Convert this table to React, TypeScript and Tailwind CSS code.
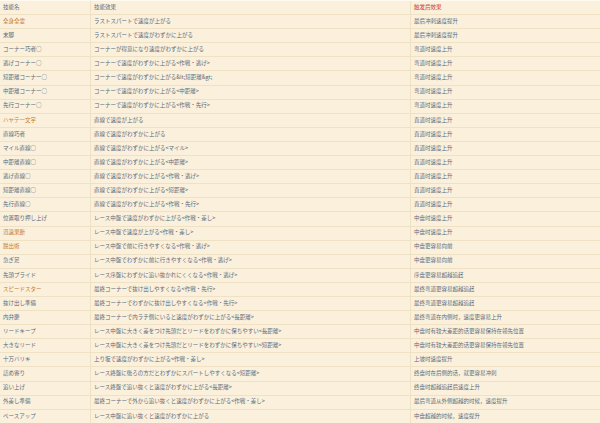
const rows: [string, string, string, boolean?][] = [
  ['全身全霊', 'ラストスパートで速度が上がる', '最后冲刺速度提升', true],
  ['末脚', 'ラストスパートで速度がわずかに上がる', '最后冲刺速度提升'],
  ['コーナー巧者○', 'コーナーが得意になり速度がわずかに上がる', '弯道时速度上升'],
  ['逃げコーナー○', 'コーナーで速度がわずかに上がる<作戦・逃げ>', '弯道时速度上升'],
  ['短距離コーナー○', 'コーナーで速度がわずかに上がる&lt;短距離&gt;', '弯道时速度上升'],
  ['中距離コーナー○', 'コーナーで速度がわずかに上がる<中距離>', '弯道时速度上升'],
  ['先行コーナー○', 'コーナーで速度がわずかに上がる<作戦・先行>', '弯道时速度上升'],
  ['ハヤテ一文字', '直線で速度が上がる', '直道时速度上升', true],
  ['直線巧者', '直線で速度がわずかに上がる', '直道时速度上升'],
  ['マイル直線○', '直線で速度がわずかに上がる<マイル>', '直道时速度上升'],
  ['中距離直線○', '直線で速度がわずかに上がる<中距離>', '直道时速度上升'],
  ['逃げ直線○', '直線で速度がわずかに上がる<作戦・逃げ>', '直道时速度上升'],
  ['短距離直線○', '直線で速度がわずかに上がる<短距離>', '直道时速度上升'],
  ['先行直線○', '直線で速度がわずかに上がる<作戦・先行>', '直道时速度上升'],
  ['位置取り押し上げ', 'レース中盤で速度がわずかに上がる<作戦・差し>', '中盘时速度上升'],
  ['迅速果断', 'レース中盤で速度が上がる<作戦・差し>', '中盘时速度上升', true],
  ['脱出術', 'レース中盤で前に行きやすくなる<作戦・逃げ>', '中盘更容易向前', true],
  ['急ぎ足', 'レース中盤でわずかに前に行きやすくなる<作戦・逃げ>', '中盘更容易向前'],
  ['先頭プライド', 'レース序盤にわずかに追い抜かれにくくなる<作戦・逃げ>', '序盘更容易超越追赶'],
  ['スピードスター', '最終コーナーで抜け出しやすくなる<作戦・先行>', '最终弯道更容易超越追赶', true],
  ['抜け出し準備', '最終コーナーでわずかに抜け出しやすくなる<作戦・先行>', '最终弯道更容易超越追赶'],
  ['内弁慶', '最終コーナーで内ラチ側にいると速度がわずかに上がる<長距離>', '最终弯道在内侧时，速度更容易上升'],
  ['リードキープ', 'レース中盤に大きく差をつけ先頭だとリードをわずかに保ちやすい<長距離>', '中盘时有较大差距的话更容易保持在领先位置'],
  ['大きなリード', 'レース中盤に大きく差をつけ先頭だとリードをわずかに保ちやすい<短距離>', '中盘时有较大差距的话更容易保持在领先位置'],
  ['十万バリキ', '上り坂で速度がわずかに上がる<作戦・差し>', '上坡时速度提升'],
  ['詰め寄り', 'レース終盤に後ろの方だとわずかにスパートしやすくなる<短距離>', '终盘时在后侧的话，就更容易冲刺'],
  ['追い上げ', 'レース終盤で追い抜くと速度がわずかに上がる<長距離>', '终盘时超越追赶后速度上升'],
  ['外差し準備', '最終コーナーで外から追い抜くと速度がわずかに上がる<作戦・差し>', '最后弯道从外侧超越的时候，速度提升'],
  ['ペースアップ', 'レース中盤に追い抜くと速度がわずかに上がる', '中盘超越的时候，速度提升'],
];

const jp = "font-['Noto_Sans_CJK_JP',sans-serif]";
const sc = "font-['Noto_Sans_CJK_SC',sans-serif]";

export default function App() {
  return (
    <div className="w-[600px] h-[423px] overflow-hidden bg-[#faf0db] text-[5.5px] leading-none text-[#5b6b7c]">
      <div className="border-t border-[#fffaf0]">
        <div className="grid grid-cols-[91px_320px_1fr] h-[14.1px] border-b border-[#efe2c4]">
          <div className={`${jp} flex items-center pl-[3px] border-r border-[#efe2c4]`}>技能名</div>
          <div className={`${jp} flex items-center pl-[3px] border-r border-[#efe2c4]`}>技能效果</div>
          <div className={`${sc} flex items-center pl-[3px] text-[#cc3b3b]`}>触发后效果</div>
        </div>
        {rows.map(([name, effect, cn, gold]) => (
          <div key={name} className="grid grid-cols-[91px_320px_1fr] h-[14.1px] border-b border-[#efe2c4]">
            <div className={`${jp} flex items-center pl-[3px] border-r border-[#efe2c4] ${gold ? 'text-[#c47b36]' : ''}`}>
              {name}
            </div>
            <div className={`${jp} flex items-center pl-[3px] border-r border-[#efe2c4] whitespace-nowrap`}>{effect}</div>
            <div className={`${sc} flex items-center pl-[3px] whitespace-nowrap`}>{cn}</div>
          </div>
        ))}
      </div>
    </div>
  );
}
